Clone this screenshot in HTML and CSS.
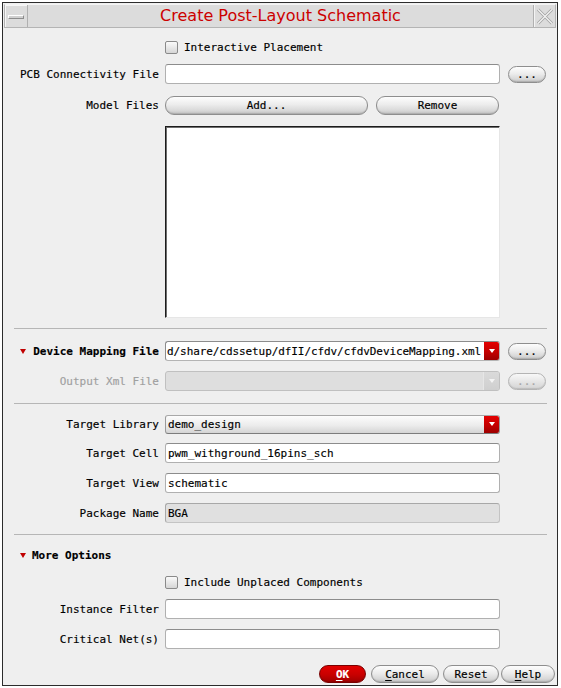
FILE: index.html
```html
<!DOCTYPE html>
<html>
<head>
<meta charset="utf-8">
<title>Create Post-Layout Schematic</title>
<link rel="stylesheet" href="styles.css">
</head>
<body>
<div class="window">
  <div class="titlebar">
    <div class="tb-menu"><span class="tb-bar"></span></div>
    <div class="tb-title">Create Post-Layout Schematic</div>
    <div class="tb-close">
      <svg width="18" height="17" viewBox="0 0 18 17">
        <path d="M2 1.5 L16 15.5 M16 1.5 L2 15.5" stroke="#a4a4a4" stroke-width="3" fill="none"/>
        <path d="M2 1.5 L16 15.5 M16 1.5 L2 15.5" stroke="#f4f4f4" stroke-width="1.2" fill="none"/>
      </svg>
    </div>
  </div>

  <div class="content">
    <div class="row row-first">
      <span class="lbl"></span>
      <label class="check"><span class="box"></span>Interactive Placement</label>
    </div>

    <div class="row row-pcb">
      <span class="lbl">PCB Connectivity File</span>
      <div class="field input"></div>
      <button class="pill more">...</button>
    </div>

    <div class="row row-model">
      <span class="lbl">Model Files</span>
      <div class="btn-pair">
        <button class="pill add">Add...</button>
        <button class="pill remove">Remove</button>
      </div>
    </div>

    <div class="row row-list">
      <span class="lbl"></span>
      <div class="listbox"></div>
    </div>

    <div class="sep sep-a"></div>

    <div class="row row-device">
      <span class="lbl lbl-tri"><span class="tri"></span><b>Device Mapping File</b></span>
      <div class="field combo combo-edit">
        <span class="combo-text combo-path">d/share/cdssetup/dfII/cfdv/cfdvDeviceMapping.xml</span>
        <span class="drop"><span class="drop-arrow"></span></span>
      </div>
      <button class="pill more">...</button>
    </div>

    <div class="row row-output">
      <span class="lbl lbl-disabled">Output Xml File</span>
      <div class="field combo combo-disabled">
        <span class="combo-text"></span>
        <span class="drop drop-disabled"><span class="drop-arrow"></span></span>
      </div>
      <button class="pill more pill-disabled">...</button>
    </div>

    <div class="sep sep-b"></div>

    <div class="row row-lib">
      <span class="lbl">Target Library</span>
      <div class="field combo combo-select">
        <span class="combo-text">demo_design</span>
        <span class="drop"><span class="drop-arrow"></span></span>
      </div>
    </div>

    <div class="row row-cell">
      <span class="lbl">Target Cell</span>
      <div class="field input"><span class="input-text">pwm_withground_16pins_sch</span></div>
    </div>

    <div class="row row-view">
      <span class="lbl">Target View</span>
      <div class="field input"><span class="input-text">schematic</span></div>
    </div>

    <div class="row row-pkg">
      <span class="lbl">Package Name</span>
      <div class="field input input-disabled"><span class="input-text">BGA</span></div>
    </div>

    <div class="sep sep-c"></div>

    <div class="row row-more">
      <span class="section"><span class="tri"></span><b>More Options</b></span>
    </div>

    <div class="row row-include">
      <span class="lbl"></span>
      <label class="check"><span class="box"></span>Include Unplaced Components</label>
    </div>

    <div class="row row-instance">
      <span class="lbl">Instance Filter</span>
      <div class="field input"></div>
    </div>

    <div class="row row-critical">
      <span class="lbl">Critical Net(s)</span>
      <div class="field input"></div>
    </div>

    <div class="actions">
      <button class="pill act act-ok"><u>O</u>K</button>
      <button class="pill act act-cancel"><u>C</u>ancel</button>
      <button class="pill act act-reset">Reset</button>
      <button class="pill act act-help"><u>H</u>elp</button>
    </div>
  </div>
</div>
</body>
</html>
```

FILE: styles.css
```css
html, body {
  margin: 0;
  padding: 0;
  background: #ffffff;
}

body {
  font-family: "DejaVu Sans Mono", "Liberation Mono", monospace;
  font-size: 11px;
  color: #000;
  -webkit-text-stroke: 0.15px;
}

.window {
  margin: 2px 0 0 2px;
  width: 556px;
  height: 684px;
  box-sizing: border-box;
  border: 1px solid #2c2c2c;
  padding: 1px;
  background: #efefef;
  display: flex;
  flex-direction: column;
}

/* ---------- title bar ---------- */
.titlebar {
  height: 24px;
  flex: none;
  box-sizing: border-box;
  display: flex;
  background: #dcdcdc;
  border: 1px solid #b4b4b4;
  border-top-color: #f4f4f4;
}

.tb-menu {
  width: 22px;
  flex: none;
  display: flex;
  align-items: center;
  justify-content: center;
  border-right: 1px solid #b0b0b0;
  box-shadow: inset 1px 1px 0 #f6f6f6;
}

.tb-bar {
  width: 14px;
  height: 2px;
  background: #d0d0d0;
  border: 1px solid #8c8c8c;
  border-top-color: #ffffff;
  border-left-color: #ffffff;
  margin-top: 1px;
}

.tb-title {
  flex: 1;
  text-align: center;
  font-family: "DejaVu Sans", sans-serif;
  font-size: 16px;
  line-height: 22px;
  color: #cc0000;
  -webkit-text-stroke: 0;
}

.tb-close {
  width: 21px;
  flex: none;
  display: flex;
  align-items: center;
  justify-content: center;
  border-left: 1px solid #b0b0b0;
  box-shadow: inset 1px 0 0 #f4f4f4;
}

/* ---------- form ---------- */
.content {
  flex: 1;
  display: flex;
  flex-direction: column;
  padding-left: 10px;
}

.row {
  display: flex;
  align-items: center;
  height: 20px;
  flex: none;
}

.row-first { margin-top: 9px; }
.row-pcb { margin-top: 7px; }
.row-model { margin-top: 12px; height: 19px; }
.row-list { margin-top: 11px; height: 192px; align-items: stretch; }
.sep-a { margin-top: 10px; }
.row-device { margin-top: 12px; }
.row-output { margin-top: 10px; }
.sep-b { margin-top: 12px; }
.row-lib { margin-top: 10px; }
.row-cell { margin-top: 9px; }
.row-view { margin-top: 10px; }
.row-pkg { margin-top: 10px; }
.sep-c { margin-top: 11px; }
.row-more { margin-top: 10px; }
.row-include { margin-top: 7px; }
.row-instance { margin-top: 7px; }
.row-critical { margin-top: 10px; }

.lbl {
  width: 145px;
  flex: none;
  text-align: right;
  white-space: nowrap;
}

.lbl-tri {
  display: flex;
  align-items: center;
  justify-content: space-between;
  box-sizing: border-box;
  padding-left: 6px;
}

.lbl-disabled {
  color: #a0a0a0;
}

.section {
  display: flex;
  align-items: center;
  padding-left: 6px;
}

.section .tri {
  margin-right: 6px;
}

.tri {
  width: 0;
  height: 0;
  border-left: 3.5px solid transparent;
  border-right: 3.5px solid transparent;
  border-top: 5px solid #c00000;
}

.sep {
  height: 1px;
  width: 533px;
  background: #b6b6b6;
  flex: none;
}

/* checkbox */
.check {
  margin-left: 6px;
  display: flex;
  align-items: center;
}

.box {
  width: 11px;
  height: 11px;
  border: 1px solid #8a8a8a;
  border-radius: 2px;
  background: linear-gradient(#fafafa, #d6d6d6);
  margin-right: 6px;
}

/* text fields */
.field {
  margin-left: 6px;
  width: 335px;
  height: 20px;
  box-sizing: border-box;
  flex: none;
}

.input {
  background: #ffffff;
  border: 1px solid #b0b0b0;
  border-top-color: #8c8c8c;
  border-radius: 3px;
  display: flex;
  align-items: center;
}

.input-disabled {
  background: #e0e0e0;
  border-color: #a8a8a8 #c4c4c4 #c4c4c4 #a8a8a8;
}

.input-text {
  padding-left: 2px;
  white-space: nowrap;
}

.combo {
  display: flex;
  align-items: stretch;
  border: 1px solid #9a9a9a;
  border-radius: 3px;
  overflow: hidden;
}

.combo-text {
  flex: 1;
  display: flex;
  align-items: center;
  padding-left: 1px;
  white-space: nowrap;
  overflow: hidden;
}

.combo-path {
  letter-spacing: -0.08px;
}

.combo-edit {
  background: #ffffff;
  border-color: #8c8c8c #b4b4b4 #b4b4b4 #8c8c8c;
}

.combo-select {
  height: 19px;
  background: linear-gradient(#fcfcfc, #ececec 55%, #d4d4d4);
  border-color: #a8a8a8 #9a9a9a #7c7c7c #9a9a9a;
}

.combo-select .combo-text {
  padding-left: 2px;
}

.combo-disabled {
  background: #dedede;
  border-color: #c0c0c0;
}

.drop {
  width: 15px;
  flex: none;
  display: flex;
  align-items: center;
  justify-content: center;
  background: linear-gradient(#e40000, #c00000 60%, #9c0000);
}

.drop-disabled {
  background: linear-gradient(#dadada, #cfcfcf);
  border-left: 1px solid #e6e6e6;
}

.drop-arrow {
  width: 0;
  height: 0;
  border-left: 3.5px solid transparent;
  border-right: 3.5px solid transparent;
  border-top: 4px solid #ffffff;
}

.drop-disabled .drop-arrow {
  border-top-color: #f4f4f4;
}

/* list */
.listbox {
  margin-left: 6px;
  width: 335px;
  box-sizing: border-box;
  background: #ffffff;
  border: 1px solid;
  border-color: #1c1c1c #e6e6e6 #e6e6e6 #1c1c1c;
  box-shadow: inset 1px 1px 0 #6e6e6e;
}

/* buttons */
.pill {
  font: inherit;
  color: #000;
  padding: 0;
  margin: 0;
  box-sizing: border-box;
  border: 1px solid #8e8e8e;
  border-radius: 9px;
  background: linear-gradient(#fdfdfd, #ececec 45%, #d8d8d8 80%, #c2c2c2);
  box-shadow: inset 0 -1px 1px rgba(0, 0, 0, 0.12);
  line-height: 1;
  cursor: default;
  -webkit-text-stroke: 0.15px;
}

.more {
  margin-left: 8px;
  width: 38px;
  height: 17px;
  flex: none;
}

.pill-disabled {
  color: #a6a6a6;
  border-color: #b4b4b4;
  background: linear-gradient(#f8f8f8, #e6e6e6 50%, #d4d4d4);
}

.btn-pair {
  margin-left: 6px;
  display: flex;
  height: 19px;
}

.add {
  width: 203px;
}

.remove {
  width: 123px;
  margin-left: 8px;
}

.actions {
  margin-top: 16px;
  display: flex;
  justify-content: flex-end;
  padding-right: 1px;
  height: 18px;
}

.act {
  height: 18px;
}

.act u {
  text-decoration: underline;
  text-underline-offset: 2px;
}

.act-ok {
  width: 47px;
  color: #ffffff;
  font-weight: bold;
  border-color: #7a0000;
  background: linear-gradient(#e20000, #c80000 55%, #a00000);
}

.act-cancel {
  width: 68px;
  margin-left: 5px;
}

.act-reset {
  width: 56px;
  margin-left: 4px;
}

.act-help {
  width: 54px;
  margin-left: 2px;
}
```
